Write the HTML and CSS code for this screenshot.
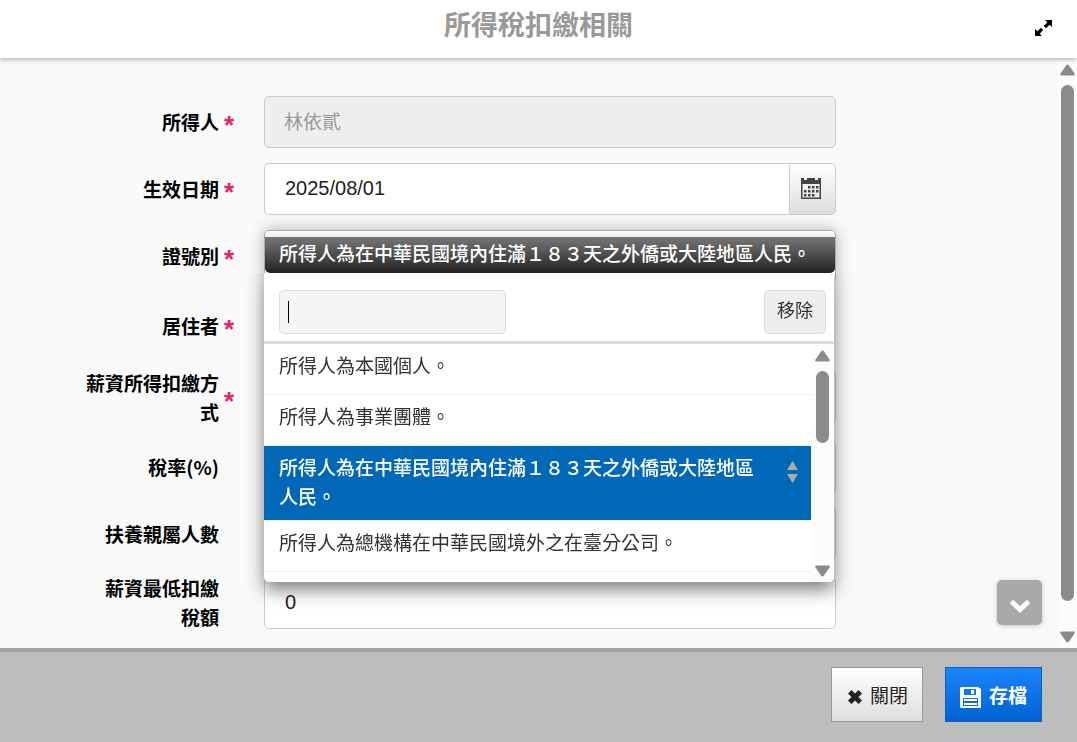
FILE: index.html
```
<!DOCTYPE html>
<html lang="zh-Hant">
<head>
  <meta charset="UTF-8">
  <meta name="viewport" content="width=device-width, initial-scale=1">
  <title>所得稅扣繳相關</title>
  <link rel="stylesheet" href="styles.css">
</head>
<body>
  <header class="dialog-header">
    <h1>所得稅扣繳相關</h1>
    <button type="button" class="btn-expand" aria-label="放大">
      <svg viewBox="0 0 17 16" width="17" height="16"><path d="M10 0h7v7l-2.300-2.300-3.700 3.500-2.200-2.200 3.500-3.700zM0 9l2.300 2.300L6 7.800 8.200 10l-3.500 3.700L7 16H0z"/></svg>
    </button>
  </header>

  <main class="dialog-body">
    <form class="form" id="tax-form">
      <div class="row">
        <label for="person">所得人</label>
        <span class="req">*</span>
        <input class="field" id="person" type="text" value="林依貳" disabled>
      </div>
      <div class="row">
        <label for="date">生效日期</label>
        <span class="req">*</span>
        <div class="date-group">
          <input class="field" id="date" type="text" value="2025/08/01">
          <button type="button" class="btn-date" aria-label="日期">
            <svg viewBox="0 0 20 21" width="20" height="21">
              <path fill="#444" fill-rule="evenodd" d="M0 0h3v2h3V0h8v2h3V0h3v21H0zM1.500 6v13.500h17V6z"/>
              <path fill="#444" d="M7 8h2.500v2.500H7zM11 8h2.500v2.500H11zM15 8h2.500v2.500H15zM3 12h2.500v2.500H3zM7 12h2.500v2.500H7zM11 12h2.500v2.500H11zM15 12h2.500v2.500H15zM3 16h2.500v2.500H3zM7 16h2.500v2.500H7zM11 16h2.500v2.500H11z"/>
            </svg>
          </button>
        </div>
      </div>
      <div class="row">
        <label for="id-type">證號別</label>
        <span class="req">*</span>
        <div class="select-box">
          <button type="button" class="select-toggle" id="id-type"><span>所得人為在中華民國境內住滿１８３天之外僑或大陸地區人民。</span></button>
          <div class="select-drop">
            <div class="drop-search">
              <input type="text" aria-label="搜尋" autofocus>
              <button type="button">移除</button>
            </div>
            <div class="drop-list">
              <ul>
                <li>所得人為本國個人。</li>
                <li>所得人為事業團體。</li>
                <li class="selected">
                  <span>所得人為在中華民國境內住滿１８３天之外僑或大陸地區<br>人民。</span>
                  <svg viewBox="0 0 11 22" width="11" height="22"><path fill="#aaa" d="M5.500 0L11 9H0zM0 13h11l-5.500 9z"/></svg>
                </li>
                <li>所得人為總機構在中華民國境外之在臺分公司。</li>
              </ul>
              <div class="scrollbar">
                <svg viewBox="0 0 15 12" width="15" height="12"><path d="M6 1.500q1.500-2 3 0l5.500 8q1 2-1 2h-12q-2 0-1-2z"/></svg>
                <div class="track"><div class="thumb thumb-list"></div></div>
                <svg viewBox="0 0 15 12" width="15" height="12"><path d="M6 10.500q1.500 2 3 0l5.500-8q1-2-1-2h-12q-2 0-1 2z"/></svg>
              </div>
            </div>
          </div>
        </div>
      </div>
      <div class="row row-resident">
        <span class="label">居住者</span>
        <span class="req">*</span>
      </div>
      <div class="row">
        <label for="method">薪資所得扣繳方<br>式</label>
        <span class="req">*</span>
        <input class="field" id="method" type="text">
      </div>
      <div class="row">
        <label for="rate">稅率(%)</label>
        <span class="req"></span>
        <input class="field" id="rate" type="text">
      </div>
      <div class="row">
        <label for="family">扶養親屬人數</label>
        <span class="req"></span>
        <input class="field" id="family" type="text">
      </div>
      <div class="row">
        <label for="minimum">薪資最低扣繳<br>稅額</label>
        <span class="req"></span>
        <input class="field" id="minimum" type="text" value="0">
      </div>
    </form>

    <div class="scrollbar scrollbar-page">
      <svg viewBox="0 0 15 12" width="15" height="12"><path d="M6 1.500q1.500-2 3 0l5.500 8q1 2-1 2h-12q-2 0-1-2z"/></svg>
      <div class="track"><div class="thumb thumb-page"></div></div>
      <svg viewBox="0 0 15 12" width="15" height="12"><path d="M6 10.500q1.500 2 3 0l5.500-8q1-2-1-2h-12q-2 0-1 2z"/></svg>
    </div>

    <button type="button" class="btn-down" aria-label="往下">
      <svg viewBox="0 0 20 13" width="20" height="13"><path d="M3 3l7 6.500L17 3" fill="none" stroke="#fff" stroke-width="5" stroke-linecap="round"/></svg>
    </button>
  </main>

  <footer class="dialog-footer">
    <button type="button" class="btn btn-close">
      <svg viewBox="0 0 14 14" width="14" height="14"><path fill="#222" d="M3.500 0L7 3.500 10.500 0 14 3.500 10.500 7l3.500 3.500-3.500 3.500L7 10.500 3.500 14 0 10.500 3.500 7 0 3.500z"/></svg>
      關閉
    </button>
    <button type="submit" form="tax-form" class="btn btn-save">
      <svg viewBox="0 0 21 21" width="21" height="21"><path fill="#fff" fill-rule="evenodd" d="M1 0h17l3 2v19H1l-1-1V1zM4 2v6h12V2zM3 11v8h15v-8z"/><path fill="#fff" d="M11 3h3v4h-3zM4 12h13v2H4zM4 16h13v2H4z"/></svg>
      存檔
    </button>
  </footer>
</body>
</html>
```
FILE: styles.css
```
* {
  box-sizing: border-box;
}
body {
  margin: 0;
  min-height: 100vh;
  display: flex;
  flex-direction: column;
  font-family: "Liberation Sans", "Noto Sans CJK TC", sans-serif;
  font-size: 19px;
  line-height: 29px;
  color: #222;
  background: #f9f9f9;
}
button, input {
  font: inherit;
  color: inherit;
}
button {
  padding: 0;
  cursor: pointer;
}
svg {
  display: block;
  flex: none;
}

/* header */
.dialog-header {
  display: flex;
  align-items: center;
  padding: 4px 25px 14px;
  background: #fff;
  box-shadow: 0 1px 5px rgba(0,0,0,0.35);
  z-index: 1;
}
.dialog-header h1 {
  flex: 1;
  margin: 0;
  padding-left: 17px;
  text-align: center;
  font-family: "Noto Sans CJK TC", sans-serif;
  font-size: 27px;
  line-height: 40px;
  color: #999;
}
.btn-expand {
  padding-top: 8px;
  border: 0;
  background: none;
}

/* form */
.dialog-body {
  position: relative;
  flex: 1;
  display: flex;
}
.form {
  flex: 1;
  display: flex;
  flex-direction: column;
  gap: 15px;
  padding: 38px 222px 17px 0;
}
.row {
  display: grid;
  grid-template-columns: 219px 45px 1fr;
  align-items: center;
}
.row-resident {
  min-height: 58px;
}
label, .label {
  margin-top: -2px;
  text-align: right;
  font-family: "Noto Sans CJK TC", sans-serif;
  font-weight: bold;
  color: #000;
}
.req {
  padding: 6px 0 0 5px;
  font-size: 26px;
  font-weight: bold;
  color: #e91e63;
}
.field {
  width: 100%;
  height: 52px;
  padding: 0 20px 2px;
  border: 1px solid #ccc;
  border-radius: 5px;
  background: #fff;
  font-size: 20px;
}
.field:disabled {
  background: #eee;
  color: #999;
  padding: 0 19px 4px;
  font-size: 19px;
}
.date-group {
  display: flex;
}
.date-group .field {
  flex: 1;
  border-right: 0;
  border-radius: 5px 0 0 5px;
}
.btn-date {
  width: 47px;
  display: flex;
  align-items: center;
  justify-content: center;
  padding: 0 4px 2px 0;
  border: 1px solid #ccc;
  border-radius: 0 5px 5px 0;
  background: linear-gradient(#fff, #ddd);
}

/* open drop-down */
.select-box {
  position: relative;
  z-index: 2;
}
.select-toggle {
  display: block;
  width: 100%;
  height: 52px;
  padding: 6px 0 8px;
  border: 1px solid #aaa;
  border-radius: 5px;
  background: linear-gradient(#fff, #eee 10%, #fff);
  box-shadow: 0 0 15px rgba(0,0,0,0.3);
  text-align: left;
  font-family: "Noto Sans CJK TC", sans-serif;
}
.select-toggle span {
  display: block;
  height: 36px;
  padding: 1px 14px 0;
  overflow: hidden;
  white-space: nowrap;
  border-radius: 0 0 5px 5px;
  background: linear-gradient(#777, #222);
  color: #fff;
  font-weight: 500;
}
.select-drop {
  position: absolute;
  top: 43px;
  left: 0;
  right: 2px;
  border-radius: 0 0 5px 5px;
  background: #fff;
  box-shadow: 0 8px 18px rgba(0,0,0,0.5);
  clip-path: inset(0 -40px -40px -40px);
  color: #333;
  font-family: "Noto Sans CJK TC", sans-serif;
}
.drop-search {
  display: flex;
  justify-content: space-between;
  padding: 17px 8px 7px 15px;
  border-bottom: 3px solid #ddd;
}
.drop-search input {
  width: 227px;
  height: 44px;
  padding: 0 8px;
  border: 1px solid #ddd;
  border-radius: 5px;
  outline: 0;
  background: #f5f5f5;
  caret-color: transparent;
}
/* steady caret, no blinking */
.drop-search input:focus {
  background: linear-gradient(#000, #000) 8px 10px / 1px 22px no-repeat #f5f5f5;
}
.drop-search button {
  width: 62px;
  height: 44px;
  padding-bottom: 5px;
  border: 1px solid #ddd;
  border-radius: 5px;
  background: #eee;
  font-size: 18px;
}
.drop-list {
  display: flex;
  height: 238px;
}
.drop-list ul {
  flex: 1;
  margin: 0;
  padding: 0;
  list-style: none;
}
.drop-list li {
  min-height: 51px;
  padding: 6px 15px 10px;
  border-bottom: 1px solid #eee;
}
.drop-list .selected {
  display: flex;
  justify-content: space-between;
  padding-right: 13px;
  background: #0068b7;
  color: #fff;
  font-weight: 500;
}
.selected svg {
  margin-top: 9px;
}

/* scroll bars */
.scrollbar {
  display: flex;
  flex-direction: column;
  align-items: center;
  gap: 9px;
  width: 23px;
  padding: 6px 0 5px;
  border-radius: 0 0 5px 0;
  background: #fcfcfc;
  fill: #8b8b8b;
}
.scrollbar-page {
  width: 19px;
}
.track {
  flex: 1;
  width: 13px;
}
.thumb {
  border-radius: 7px;
  background: #8b8b8b;
}
.thumb-list {
  height: 39%;
}
.thumb-page {
  height: 96%;
}

.btn-down {
  position: absolute;
  right: 35px;
  bottom: 23px;
  width: 45px;
  height: 45px;
  display: flex;
  align-items: center;
  justify-content: center;
  padding-top: 8px;
  border: 0;
  border-radius: 5px;
  background: #a9a9a9;
  box-shadow: 0 1px 5px rgba(0,0,0,0.2);
}

/* footer */
.dialog-footer {
  display: flex;
  justify-content: flex-end;
  gap: 22px;
  padding: 15px 35px 20px;
  border-top: 4px solid #a3a3a3;
  background: #bdbdbd;
}
.btn {
  height: 55px;
  display: flex;
  align-items: center;
  gap: 8px;
  padding: 0 14px;
  font-family: "Noto Sans CJK TC", sans-serif;
}
.btn svg {
  margin-top: 5px;
}
.btn-close {
  padding-left: 16px;
  border: 1px solid #999;
  background: linear-gradient(#fff, #ddd);
  text-shadow: 0 1px 0 #fff;
}
.btn-save {
  border: 1px solid #0a5fc4;
  background: linear-gradient(#1a85ff, #0062d1);
  color: #fff;
  font-weight: bold;
}
```
